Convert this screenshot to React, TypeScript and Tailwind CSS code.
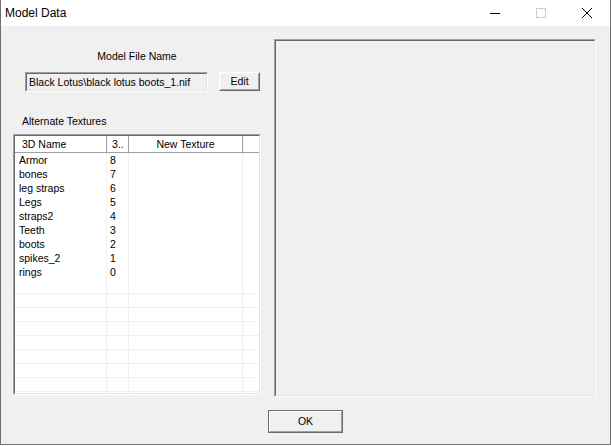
import React from 'react';

const textures: [string, string][] = [
    ['Armor', '8'],
    ['bones', '7'],
    ['leg straps', '6'],
    ['Legs', '5'],
    ['straps2', '4'],
    ['Teeth', '3'],
    ['boots', '2'],
    ['spikes_2', '1'],
    ['rings', '0'],
];

// classic sunken 2px frame
function Sunken({ className, children }: { className?: string; children?: React.ReactNode }) {
    return (
        <div className={`border border-t-[#a0a0a0] border-l-[#a0a0a0] border-r-white border-b-white ${className ?? ''}`}>
            <div className="h-full w-full border border-t-[#696969] border-l-[#696969] border-r-[#e3e3e3] border-b-[#e3e3e3] overflow-hidden">
                {children}
            </div>
        </div>
    );
}

export default function App() {
    const rows = Array.from({ length: 18 }, (_, i) => textures[i] ?? null);

    return (
        <div className="w-[611px] h-[446px] bg-white overflow-hidden font-['Liberation_Sans',Arial,sans-serif] text-black">
            <div className="h-[445px] flex flex-col border-l border-r border-b border-[#707070]">
                {/* Title bar */}
                <div className="h-[26px] bg-white flex items-center shrink-0">
                    <span className="pl-[4px] text-[12px] leading-[16px]">Model Data</span>
                    <div className="ml-auto flex h-full">
                        <div className="w-[46px] h-full flex items-center justify-center">
                            <svg width="10" height="10" viewBox="0 0 10 10">
                                <line x1="0" y1="5.5" x2="10" y2="5.5" stroke="#000" strokeWidth="1" />
                            </svg>
                        </div>
                        <div className="w-[46px] h-full flex items-center justify-center">
                            <svg width="10" height="10" viewBox="0 0 10 10">
                                <rect x="0.5" y="0.5" width="9" height="9" fill="none" stroke="#cccccc" strokeWidth="1" />
                            </svg>
                        </div>
                        <div className="w-[46px] h-full flex items-center justify-center">
                            <svg width="10" height="10" viewBox="0 0 10 10">
                                <path d="M0 0 L10 10 M10 0 L0 10" stroke="#000" strokeWidth="1" />
                            </svg>
                        </div>
                    </div>
                </div>

                {/* Dialog body */}
                <div className="flex-1 bg-[#f0f0f0] flex flex-col text-[10.5px] leading-[13px]">
                    <div className="flex items-start pl-[12px] gap-[13px]">
                        {/* Left column */}
                        <div className="w-[248px] flex flex-col">
                            <div className="mt-[24px] text-center">Model File Name</div>
                            <div className="mt-[9px] flex items-start">
                                <Sunken className="ml-[12px] w-[183px] h-[20px]">
                                    <div className="pt-[2px] pl-[2px] whitespace-nowrap bg-[#f0f0f0] h-full">
                                        Black Lotus\black lotus boots_1.nif
                                    </div>
                                </Sunken>
                                <button className="ml-[11px] w-[41px] h-[19px] border border-t-white border-l-white border-r-[#696969] border-b-[#696969] bg-[#f0f0f0]">
                                    <div className="h-full flex items-center justify-center border border-transparent border-r-[#a0a0a0] border-b-[#a0a0a0]">
                                        Edit
                                    </div>
                                </button>
                            </div>
                            <div className="mt-[23px] ml-[9px]">Alternate Textures</div>

                            {/* Texture list */}
                            <Sunken className="mt-[6px] h-[261px] bg-white">
                                <div className="flex h-[17px] bg-white">
                                    <div className="w-[92px] flex items-center pl-[7px] border-r border-b border-r-[#a0a0a0] border-b-[#a0a0a0]">3D Name</div>
                                    <div className="w-[22px] flex items-center pl-[5px] border-r border-b border-r-[#a0a0a0] border-b-[#a0a0a0]">3..</div>
                                    <div className="w-[114px] flex items-center justify-center border-r border-b border-r-[#a0a0a0] border-b-[#a0a0a0]">New Texture</div>
                                    <div className="flex-1 border-b border-b-[#a0a0a0]" />
                                </div>
                                {rows.map((row, i) => (
                                    <div
                                        key={i}
                                        className={`flex h-[14px] bg-white ${i >= 10 ? 'border-t border-t-[#f0f0f0]' : ''}`}
                                    >
                                        <div className="w-[92px] pl-[4px] pt-[1px] border-r border-r-[#f0f0f0] whitespace-nowrap">{row?.[0]}</div>
                                        <div className="w-[22px] pl-[3px] pt-[1px] border-r border-r-[#f0f0f0]">{row?.[1]}</div>
                                        <div className="w-[114px] border-r border-r-[#f0f0f0]" />
                                        <div className="flex-1" />
                                    </div>
                                ))}
                            </Sunken>
                        </div>

                        {/* Preview panel */}
                        <Sunken className="mt-[13px] w-[322px] h-[358px] bg-[#f0f0f0]" />
                    </div>

                    <div className="flex justify-center mt-[13px]">
                        <button className="w-[75px] h-[23px] border border-[#6d6d6d] bg-[#f0f0f0]">
                            <div className="h-full border border-t-white border-l-white border-r-[#a0a0a0] border-b-[#a0a0a0] flex items-center justify-center">
                                OK
                            </div>
                        </button>
                    </div>
                </div>
            </div>
        </div>
    );
}
